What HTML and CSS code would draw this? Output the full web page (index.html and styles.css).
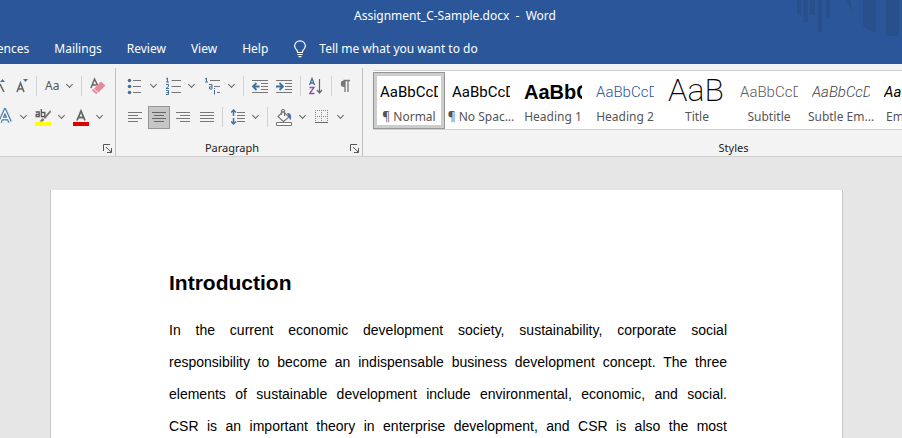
FILE: index.html
```html
<!DOCTYPE html>
<html lang="en">
<head>
  <meta charset="UTF-8">
  <meta name="viewport" content="width=device-width, initial-scale=1.0">
  <title>Assignment_C-Sample.docx - Word</title>
  <link rel="stylesheet" href="styles.css">
</head>

<body>
  <header class="app-header">
    <svg class="header-art" width="112" height="40" viewBox="0 0 112 40" aria-hidden="true">
      <path d="M7 0h4v15H7zM13 0h5v22h-5zM20 0h5v15h-5zM28 0h4v32h-4zM36 0h4v18h-4zM56 0h4l2 12zM73 0h13v32q-8-1-13-6zM96 0h13v36H96z" fill="#28508a"/>
    </svg>
    <div class="title-bar">Assignment_C-Sample.docx&nbsp; -&nbsp; Word</div>
    <nav class="tabs">
      <a href="#references">References</a>
      <a href="#mailings">Mailings</a>
      <a href="#review">Review</a>
      <a href="#view">View</a>
      <a href="#help">Help</a>
      <label class="tell-me">
        <svg width="14" height="18" viewBox="0 0 14 18" fill="none" stroke="#fff" stroke-width="1.2">
          <path d="M4.5 12.500V11C3 9.500 1.600 8.200 1.600 6a5.400 5.200 0 0 1 10.800 0c0 2.200-1.400 3.500-2.900 5v1.500zM4.500 14.500h5M5.500 16.600h3"/>
        </svg>
        <input type="text" placeholder="Tell me what you want to do" aria-label="Tell me what you want to do">
      </label>
    </nav>
  </header>

  <section class="ribbon">
    <div class="group font-group">
      <div class="row">
        <button class="tool" aria-label="Grow font">
          <svg width="6" height="18" viewBox="0 0 6 18"><path d="M0 5l2.500-3L5 5z" fill="#41719c"/><path d="M0 7l4 8" stroke="#666" stroke-width="1.600"/></svg>
        </button>
        <button class="tool" aria-label="Shrink font">
          <svg width="14" height="18" viewBox="0 0 14 18"><path d="M9 2h5l-2.500 3z" fill="#41719c"/><path d="M3 15L6.500 6l3.500 9M4.500 12h4" fill="none" stroke="#666" stroke-width="1.600"/></svg>
        </button>
        <span class="sep"></span>
        <button class="tool split case" aria-label="Change case"><span>Aa</span><i class="chevron"></i></button>
        <span class="sep"></span>
        <button class="tool" aria-label="Clear formatting">
          <svg width="16" height="18" viewBox="0 0 16 18"><path d="M1 11L4.500 2 8 9M2.500 8h4" fill="none" stroke="#666" stroke-width="1.500"/><path d="M4 11.500L11 4.500l4.500 4-7 7z" fill="#e58a9c"/><path d="M2.500 12.500l4.500 4" stroke="#e58a9c" stroke-width="2"/></svg>
        </button>
      </div>
      <div class="row">
        <button class="tool split" aria-label="Text effects">
          <svg width="13" height="18" viewBox="0 0 13 18" fill="none"><path d="M0 14L5 3l5 11M2 10.500h6" stroke="#bcd5f0" stroke-width="5"/><path d="M0 14L5 3l5 11M2 10.500h6" stroke="#41719c" stroke-width="3.400"/><path d="M0 14L5 3l5 11M2 10.500h6" stroke="#fff" stroke-width="1.400"/></svg>
          <i class="chevron"></i>
        </button>
        <button class="tool split" aria-label="Text highlight color">
          <svg width="16" height="18" viewBox="0 0 16 18"><path d="M0 14h16v4H0z" fill="#ff0"/><g fill="none" stroke="#555" stroke-width="1.300"><path d="M.7 4h3.500v4.500H1.200V6.300h3M6.300 1v7.500h3.500V4.500H6.300"/></g><path d="M15.500 2L8.500 9.500l1.500 1.500 6-7zM7.500 10L4.500 13.500h3.500l1.300-1.800z" fill="#777"/></svg>
          <i class="chevron"></i>
        </button>
        <button class="tool split" aria-label="Font color">
          <svg width="16" height="18" viewBox="0 0 16 18"><path d="M0 14h16v4H0z" fill="#e00000"/><path d="M4 12.500L8 3l4 9.500M5.500 9.500h5" fill="none" stroke="#666" stroke-width="1.800"/></svg>
          <i class="chevron"></i>
        </button>
      </div>
      <div class="group-label">
        <span></span>
        <button class="launcher" aria-label="Font settings"><svg width="9" height="9" viewBox="0 0 9 9" fill="none" stroke="#555"><path d="M.5 7V.5H7M3 3l5 5M8.500 4v4.500H4"/></svg></button>
      </div>
    </div>

    <div class="group paragraph-group">
      <div class="row">
        <button class="tool split" aria-label="Bullets">
          <svg width="16" height="18" viewBox="0 0 16 18"><g fill="#41719c"><circle cx="2.500" cy="3.500" r="1.800"/><circle cx="2.500" cy="9.500" r="1.800"/><circle cx="2.500" cy="15.500" r="1.800"/></g><path d="M6 3.500h8M6 9.500h8M6 15.500h8" stroke="#777"/></svg>
          <i class="chevron"></i>
        </button>
        <button class="tool split" aria-label="Numbering">
          <svg width="16" height="18" viewBox="0 0 16 18" fill="none"><path d="M1 2.200L2.500 1v4M1 5h3M1 7.500h2.500v2L1 11.500h3M1 13.500h2.500v4H1M1.500 15.500h2" stroke="#41719c"/><path d="M6.500 3.500H16M6.500 9.500H16M6.500 15.500H16" stroke="#777"/></svg>
          <i class="chevron"></i>
        </button>
        <button class="tool split" aria-label="Multilevel list">
          <svg width="18" height="18" viewBox="0 0 18 18" fill="none"><path d="M2 2.200L3.500 1v4M2 5h3M6 7.500h3V12H6.500V9.800H9M11.500 13v4.500M11.500 11v1" stroke="#41719c"/><path d="M7 3.500h10M11 9.500h6M14 15.500h3" stroke="#777"/></svg>
          <i class="chevron"></i>
        </button>
        <span class="sep"></span>
        <button class="tool" aria-label="Decrease indent">
          <svg width="16" height="18" viewBox="0 0 16 18" fill="none"><path d="M0 3.500h16M9 6.500h7M9 9.500h7M9 12.500h7M0 15.500h16" stroke="#777"/><path d="M7.500 9.500h-6M4.500 6L1 9.500 4.500 13" stroke="#41719c" stroke-width="1.800"/></svg>
        </button>
        <button class="tool" aria-label="Increase indent">
          <svg width="16" height="18" viewBox="0 0 16 18" fill="none"><path d="M0 3.500h16M9 6.500h7M9 9.500h7M9 12.500h7M0 15.500h16" stroke="#777"/><path d="M0 9.500h6M3.500 6L7 9.500 3.500 13" stroke="#41719c" stroke-width="1.800"/></svg>
        </button>
        <span class="sep"></span>
        <button class="tool" aria-label="Sort">
          <svg width="14" height="18" viewBox="0 0 14 18" fill="none"><path d="M.5 8L3 1.500 5.500 8M1.300 6h3.500" stroke="#41719c" stroke-width="1.300"/><path d="M.5 10.500h4.500L.7 16.500h4.800" stroke="#9b4f9b" stroke-width="1.300"/><path d="M10.500 2v14M8 13l2.500 3 2.500-3" stroke="#666" stroke-width="1.200"/></svg>
        </button>
        <span class="sep"></span>
        <button class="tool" aria-label="Show formatting marks">
          <svg width="12" height="18" viewBox="0 0 12 18"><path d="M5 3.500h-1a3.200 3.200 0 0 0 0 6.400h1z" fill="#777"/><path d="M3.500 3.500H10M5 3v12M8 3v12" stroke="#777" stroke-width="1.300"/></svg>
        </button>
      </div>
      <div class="row">
        <div class="align-tools">
          <button class="tool" aria-label="Align left">
            <svg width="14" height="18" viewBox="0 0 14 18"><path d="M0 4.500h14M0 7.500h10M0 10.500h14M0 13.500h10" stroke="#777"/></svg>
          </button>
          <button class="tool active" aria-label="Center" aria-pressed="true">
            <svg width="14" height="18" viewBox="0 0 14 18"><path d="M0 4.500h14M2 7.500h10M0 10.500h14M2 13.500h10" stroke="#666"/></svg>
          </button>
          <button class="tool" aria-label="Align right">
            <svg width="14" height="18" viewBox="0 0 14 18"><path d="M0 4.500h14M4 7.500h10M0 10.500h14M4 13.500h10" stroke="#777"/></svg>
          </button>
          <button class="tool" aria-label="Justify">
            <svg width="14" height="18" viewBox="0 0 14 18"><path d="M0 4.500h14M0 7.500h14M0 10.500h14M0 13.500h14" stroke="#777"/></svg>
          </button>
        </div>
        <span class="sep"></span>
        <button class="tool split" aria-label="Line spacing">
          <svg width="14" height="18" viewBox="0 0 14 18" fill="none"><path d="M2.500 2v6M0 4.500L2.500 2 5 4.500M2.500 10v6M0 13.500L2.500 16 5 13.500" stroke="#41719c" stroke-width="1.500"/><path d="M6 4.500h8M6 7.500h8M6 10.500h8M6 13.500h8" stroke="#777"/></svg>
          <i class="chevron"></i>
        </button>
        <span class="sep"></span>
        <button class="tool split" aria-label="Shading">
          <svg width="16" height="18" viewBox="0 0 16 18"><path d="M7 3.500l6 5.500-5.500 4.500L2 8.500z" fill="#fff" stroke="#777" stroke-width="1.200"/><path d="M5.500 7V2.500q1.500-2.500 3 0V8" fill="none" stroke="#777" stroke-width="1.200"/><path d="M11 5q5-1 4 7-1.500 0-2-3z" fill="#41719c"/><path d="M.5 14.500h15v3H.5z" fill="#fff" stroke="#777"/></svg>
          <i class="chevron"></i>
        </button>
        <button class="tool split" aria-label="Borders">
          <svg width="16" height="18" viewBox="0 0 16 18"><path d="M1 2.500h13M1 8.500h13M1.500 2v13M7.500 2v13M13.500 2v13" stroke="#888" stroke-dasharray="1 1"/><path d="M1 14.500h13" stroke="#666"/></svg>
          <i class="chevron"></i>
        </button>
      </div>
      <div class="group-label">
        <span>Paragraph</span>
        <button class="launcher" aria-label="Paragraph settings"><svg width="9" height="9" viewBox="0 0 9 9" fill="none" stroke="#555"><path d="M.5 7V.5H7M3 3l5 5M8.500 4v4.500H4"/></svg></button>
      </div>
    </div>

    <div class="group styles-group">
      <div class="gallery">
        <button class="style-item selected"><span class="preview">AaBbCcD</span><span class="name">¶ Normal</span></button>
        <button class="style-item"><span class="preview">AaBbCcD</span><span class="name">¶ No Spac...</span></button>
        <button class="style-item"><span class="preview heading-1">AaBbC</span><span class="name">Heading 1</span></button>
        <button class="style-item"><span class="preview heading-2">AaBbCcD</span><span class="name">Heading 2</span></button>
        <button class="style-item"><span class="preview title">AaB</span><span class="name">Title</span></button>
        <button class="style-item"><span class="preview subtitle">AaBbCcD</span><span class="name">Subtitle</span></button>
        <button class="style-item"><span class="preview subtle">AaBbCcD</span><span class="name">Subtle Em...</span></button>
        <button class="style-item"><span class="preview emphasis">AaBbCcD</span><span class="name">Emphasis</span></button>
      </div>
      <div class="group-label"><span>Styles</span></div>
    </div>
  </section>

  <main class="workspace">
    <article class="page">
      <h1>Introduction</h1>
      <p>
        In the current economic development society, sustainability, corporate social<br>
        responsibility to become an indispensable business development concept. The three<br>
        elements of sustainable development include environmental, economic, and social.<br>
        CSR is an important theory in enterprise development, and CSR is also the most
      </p>
    </article>
  </main>
</body>
</html>
```
FILE: styles.css
```css
* {
  box-sizing: border-box;
}

body {
  margin: 0;
  height: 100vh;
  display: flex;
  flex-direction: column;
  overflow: hidden;
  background: #e6e6e6;
  font-family: "Noto Sans", "Open Sans", sans-serif;
  font-size: 12px;
  line-height: 16px;
}

button,
input {
  padding: 0;
  border: 0;
  background: none;
  font: inherit;
  color: inherit;
}

svg {
  display: block;
  flex: none;
}

/* Title bar and tabs */
.app-header {
  position: relative;
  flex: none;
  background: #2b579a;
  color: #fff;
}

.header-art {
  position: absolute;
  top: 0;
  right: 0;
}

.title-bar {
  padding: 8px 0 8px 8px;
  text-align: center;
}

.tabs {
  display: flex;
  align-items: center;
  gap: 25px;
  height: 32px;
  padding-top: 2px;
  margin-left: -33px; /* first tab runs off the left edge */
}

.tabs a {
  color: inherit;
  text-decoration: none;
}

.tell-me {
  display: flex;
  align-items: center;
  gap: 12px;
}

.tell-me input {
  width: 200px;
  outline: none;
}

.tell-me input::placeholder {
  color: #fff;
  opacity: 1;
}

/* Ribbon */
.ribbon {
  display: flex;
  flex: none;
  padding-top: 4px;
  background: #f3f3f3;
  border-bottom: 1px solid #d0d0d0;
  overflow: hidden;
}

.group {
  display: flex;
  flex-direction: column;
  flex: none;
  height: 88px;
  border-right: 1px solid #c0c0c0;
}

.font-group {
  width: 116px;
}

.paragraph-group {
  width: 247px;
}

.paragraph-group .row {
  padding-left: 11px;
}

.styles-group {
  min-width: 741px;
  padding: 2px 9px 0 10px;
}

.row {
  display: flex;
  align-items: center;
  gap: 8px;
  height: 36px;
}

.row + .row {
  height: 26px;
}

.sep {
  width: 1px;
  height: 20px;
  background: #d0d0d0;
}

.tool {
  display: flex;
  align-items: center;
  color: #555;
}

.split {
  gap: 6px;
}

.case span {
  width: 14px;
  font-size: 12px;
}

.chevron {
  width: 8px;
  height: 8px;
  display: flex;
  justify-content: center;
}

.chevron::before {
  content: "";
  width: 4px;
  height: 4px;
  border: solid #666;
  border-width: 0 1px 1px 0;
  transform: rotate(45deg);
}

.align-tools {
  display: flex;
  gap: 2px;
  margin: 0 -4px 0 -3px;
}

.align-tools .tool {
  justify-content: center;
  width: 22px;
  height: 23px;
}

.align-tools .active {
  background: #c6c6c6;
  border: 1px solid #969696;
}

.group-label {
  display: flex;
  align-items: flex-start;
  height: 16px;
  margin-top: auto;
  color: #222;
  font-size: 11px;
}

.group-label span {
  flex: 1;
  text-align: center;
}

.launcher {
  width: 14px;
  padding: 4px 3px 0 2px;
}

/* Styles gallery */
.gallery {
  display: flex;
  height: 60px;
  padding-top: 1px;
  background: #fff;
  border: 1px solid #d0d0d0;
  border-right: 0;
  border-left: 0;
}

.style-item {
  display: flex;
  flex-direction: column;
  align-items: center;
  gap: 2px;
  width: 72px;
  height: 57px;
  padding: 4px 0 0;
  border: 1px solid transparent;
}

.style-item.selected {
  border-color: #969696;
  box-shadow: inset 0 0 0 3px #cdcdcd;
}

.preview {
  width: 58px;
  height: 30px;
  overflow: hidden;
  color: #000;
  font-family: Roboto, sans-serif;
  font-size: 15px;
  line-height: 30px;
  text-align: left;
}

.heading-1 {
  font-family: "Liberation Sans", Arial, sans-serif;
  font-size: 20px;
  font-weight: bold;
}

.heading-2 {
  color: #2f5496;
  font-weight: 300;
}

.title {
  font-size: 32px;
  font-weight: 200;
  line-height: 26px;
}

.subtitle {
  color: #5a5a5a;
  font-weight: 300;
}

.subtle {
  color: #404040;
  font-style: italic;
  font-weight: 300;
}

.emphasis {
  font-style: italic;
}

.name {
  color: #555;
  white-space: nowrap;
}

/* Document */
.workspace {
  flex: 1;
  min-height: 0;
  padding: 33px 59px 0 50px;
}

.page {
  height: 100%;
  padding: 80px 115px 0 118px;
  background: #fff;
  border: solid #c6c6c6;
  border-width: 0 1px;
  overflow: hidden;
  color: #000;
  font-family: "Liberation Sans", Arial, sans-serif;
}

.page h1 {
  margin: 0 0 18px;
  font-size: 21px;
  line-height: 26px;
}

.page p {
  margin: 0;
  font-size: 14px;
  line-height: 32px;
  text-align: justify;
  text-align-last: justify;
}
```
